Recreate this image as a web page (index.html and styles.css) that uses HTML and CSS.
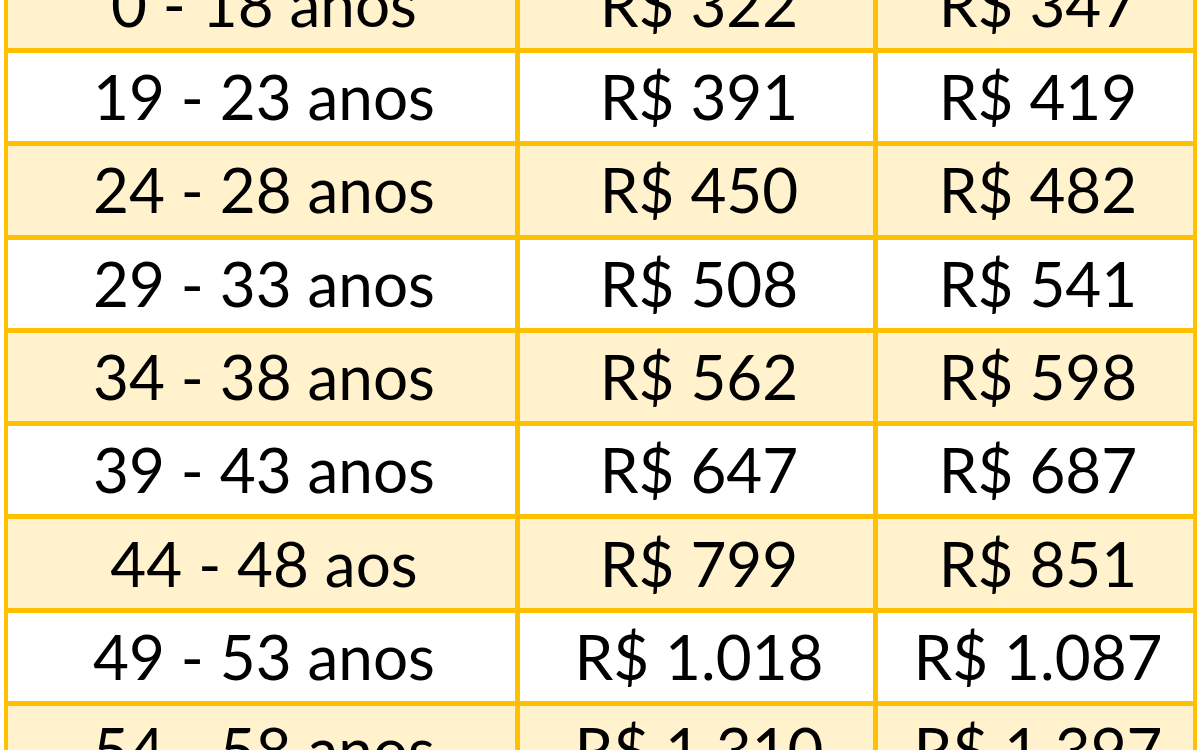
FILE: index.html
```html
<!DOCTYPE html>
<html lang="pt-BR">
<head>
<meta charset="utf-8">
<title>Tabela de preços por faixa etária</title>
<link rel="stylesheet" href="styles.css">
</head>
<body>
<div class="page">
  <div class="table">
    <div class="cell odd">0 - 18 anos</div><div class="cell odd">R$ 322</div><div class="cell odd">R$ 347</div>
    <div class="cell even">19 - 23 anos</div><div class="cell even">R$ 391</div><div class="cell even">R$ 419</div>
    <div class="cell odd">24 - 28 anos</div><div class="cell odd">R$ 450</div><div class="cell odd">R$ 482</div>
    <div class="cell even">29 - 33 anos</div><div class="cell even">R$ 508</div><div class="cell even">R$ 541</div>
    <div class="cell odd">34 - 38 anos</div><div class="cell odd">R$ 562</div><div class="cell odd">R$ 598</div>
    <div class="cell even">39 - 43 anos</div><div class="cell even">R$ 647</div><div class="cell even">R$ 687</div>
    <div class="cell odd">44 - 48 aos</div><div class="cell odd">R$ 799</div><div class="cell odd">R$ 851</div>
    <div class="cell even">49 - 53 anos</div><div class="cell even">R$ 1.018</div><div class="cell even">R$ 1.087</div>
    <div class="cell odd">54 - 58 anos</div><div class="cell odd">R$ 1.310</div><div class="cell odd">R$ 1.397</div>
  </div>
</div>
</body>
</html>
```
FILE: styles.css
```css
html, body {
  margin: 0;
  padding: 0;
  background: #ffffff;
}
.page {
  width: 1200px;
  height: 750px;
  overflow: hidden;
  padding-left: 4px;
  box-sizing: border-box;
}
.table {
  display: grid;
  grid-template-columns: 507px 353px 315px;
  grid-auto-rows: 88.3px;
  gap: 5px;
  padding: 0 4px 5px 4px;
  background: #ffc000;
  width: max-content;
  margin-top: -40.3px;
  font-family: Lato, "Open Sans", sans-serif;
  font-size: 62px;
  color: #000000;
}
.cell {
  display: flex;
  align-items: center;
  justify-content: center;
  padding-left: 5px;
  padding-bottom: 2px;
  white-space: nowrap;
  line-height: 1;
}
.odd {
  background: #fff2cc;
}
.even {
  background: #ffffff;
}
```
